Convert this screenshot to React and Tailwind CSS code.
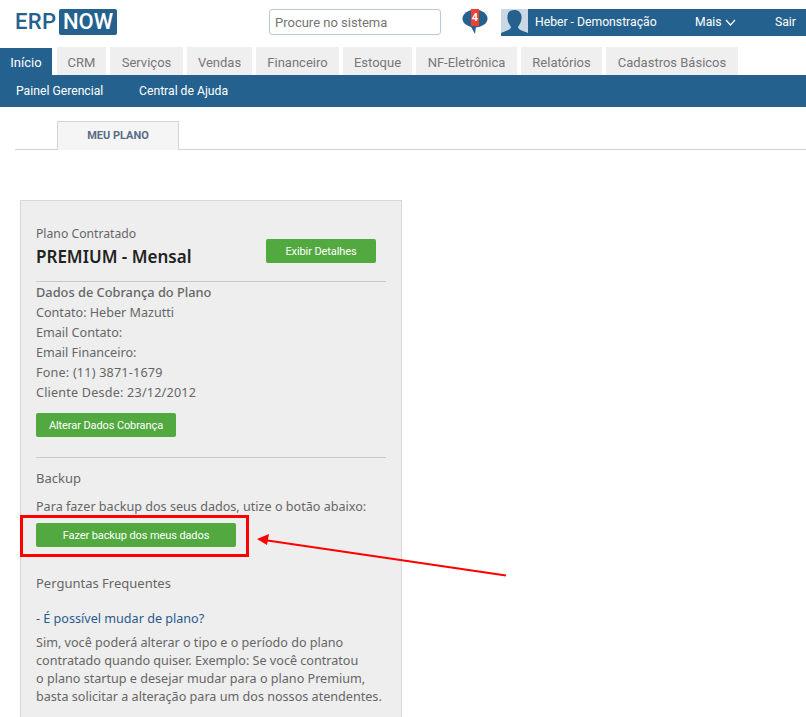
import React from "react";

const tabs = [
  ["CRM", "w-[49px] ml-[1px]"],
  ["Serviços", "w-[73px]"],
  ["Vendas", "w-[65px]"],
  ["Financeiro", "w-[83px]"],
  ["Estoque", "w-[69px]"],
  ["NF-Eletrônica", "w-[101px]"],
  ["Relatórios", "w-[81px]"],
  ["Cadastros Básicos", "w-[132px]"],
];

function Btn({ className, children }) {
  return (
    <div className={"h-6 flex items-center justify-center rounded-[2px] bg-[#52a93f] pt-[1px] text-white text-[11px] tracking-[-0.1px] font-['Roboto',sans-serif] " + className}>
      {children}
    </div>
  );
}

export default function App() {
  return (
    <div className="relative h-[717px] w-[806px] overflow-hidden bg-white font-['Roboto',sans-serif]">
      <header className="flex h-[47px] items-start">
        <div className="ml-[15px] mt-[9px] flex h-[26px] items-center">
          <span className="w-[44px] text-[22px] font-medium leading-none tracking-[0.3px] text-[#25618e]">ERP</span>
          <span className="flex h-[26px] w-[58px] items-center justify-center rounded-[2px] bg-[#25618e] text-[22px] font-medium leading-none text-white">NOW</span>
        </div>
        <div className="ml-[152px] mt-[9px] flex h-[26px] w-[172px] items-center rounded-[3px] border border-[#b9c8dc] pl-[5px] pt-[1px] text-[13px] text-[#757575]">
          Procure no sistema
        </div>
        <div className="relative ml-[21px] mt-[9px] h-[26px] w-[26px]">
          <svg width="26" height="26" viewBox="0 0 26 26" className="absolute left-0 top-0">
            <ellipse cx="13" cy="9.5" rx="12.5" ry="9" fill="#25618e" />
            <path d="M8 16 L13 25 L14 17 Z" fill="#25618e" />
          </svg>
          <span className="absolute left-[9px] top-0 flex h-[17px] w-[8px] items-center justify-center bg-[#f04030] text-[11px] font-bold leading-none text-white">4</span>
        </div>
        <div className="ml-[13px] mt-[9px] flex h-[27px] flex-1 items-center bg-[#25618e] text-[12.2px] text-white">
          <div className="h-[27px] w-[27px] shrink-0 bg-[#c9d8e4]">
            <svg width="27" height="27" viewBox="0 0 27 27">
              <path d="M0 27 L0 24 C4 22 10 21 10 18 C8 15 6 12 6.5 7 C7 2 10 1 13.5 1 C17 1 20 3 20.5 7 C21 12 19 15 17 18 C17 21 23 22 27 24 L27 27 Z" fill="#25618e" />
            </svg>
          </div>
          <span className="ml-[7px] w-[160px]">Heber - Demonstração</span>
          <span className="flex w-[80px] items-center gap-[3px]">
            Mais
            <svg width="11" height="7" viewBox="0 0 11 7" fill="none" stroke="white" strokeWidth="1.2"><path d="M1 1 L5.5 6 L10 1" /></svg>
          </span>
          <span>Sair</span>
        </div>
      </header>

      <nav className="flex h-[28px] items-stretch gap-[4px] text-[13px] text-[#777]">
        <div className="mt-[1px] flex w-[52px] items-center justify-center bg-[#25618e] pt-[2px] text-white">Início</div>
        {tabs.map(([t, w]) => (
          <div key={t} className={"flex items-center justify-center bg-[#efefef] pt-[3px] " + w}>{t}</div>
        ))}
      </nav>
      <div className="flex h-[32px] items-center bg-[#25618e] pl-[16px] pt-[1px] text-[12.2px] text-white">
        <span className="w-[123px]">Painel Gerencial</span>
        <span>Central de Ajuda</span>
      </div>

      <div className="ml-[15px] mt-[14px] h-[29px] border-b border-[#d4d4d4] pl-[42px]">
        <div className="flex h-[29px] w-[122px] items-center justify-center border border-b-0 border-[#d4d4d4] bg-[#f5f5f5] text-[11px] font-bold text-[#5a6b85]">
          MEU PLANO
        </div>
      </div>

      <section className="ml-[20px] mt-[50px] h-[600px] w-[382px] border border-[#d8d8d8] bg-[#eeeeee] px-[15px] pt-[23px] font-['Noto_Sans',sans-serif] text-[12.6px] leading-[20px] text-[#666]">
        <div className="flex h-[58px] items-start justify-between border-b border-[#c8c8c8] pr-[10px]">
          <div>
            <div className="text-[12.2px]">Plano Contratado</div>
            <div className="mt-[1px] text-[17px] font-semibold leading-[24px] text-[#222]">PREMIUM - Mensal</div>
          </div>
          <Btn className="mt-[15px] w-[110px]">Exibir Detalhes</Btn>
        </div>
        <div className="text-[12.8px] font-medium leading-[21px]">Dados de Cobrança do Plano</div>
        <div>Contato: Heber Mazutti</div>
        <div>Email Contato:</div>
        <div>Email Financeiro:</div>
        <div className="tracking-[0.2px]">Fone: (11) 3871-1679</div>
        <div className="tracking-[0.2px]">Cliente Desde: 23/12/2012</div>
        <Btn className="mt-[10px] w-[140px]">Alterar Dados Cobrança</Btn>
        <div className="mt-[20px] border-t border-[#c8c8c8] pt-[10px] text-[13px]">Backup</div>
        <div className="mt-[9px]">Para fazer backup dos seus dados, utize o botão abaixo:</div>
        <Btn className="mt-[6px] w-[200px]">Fazer backup dos meus dados</Btn>
        <div className="mt-[26px] text-[13px]">Perguntas Frequentes</div>
        <div className="mt-[16px] text-[#2a5a8c]">- É possível mudar de plano?</div>
        <div className="mt-[5px] leading-[18px]">
          <div>Sim, você poderá alterar o tipo e o período do plano</div>
          <div>contratado quando quiser. Exemplo: Se você contratou</div>
          <div>o plano startup e desejar mudar para o plano Premium,</div>
          <div>basta solicitar a alteração para um dos nossos atendentes.</div>
        </div>
      </section>

      <div className="absolute left-[20px] top-[515px] h-[42px] w-[229px] border-[3px] border-[#ff0000]" />
      <svg className="absolute left-[250px] top-[530px]" width="260" height="50" viewBox="0 0 260 50">
        <path d="M14 10 L256 45.5" stroke="#ff0000" strokeWidth="2" fill="none" />
        <path d="M7 9 L19 4 L17 15 Z" fill="#ff0000" />
      </svg>
    </div>
  );
}
